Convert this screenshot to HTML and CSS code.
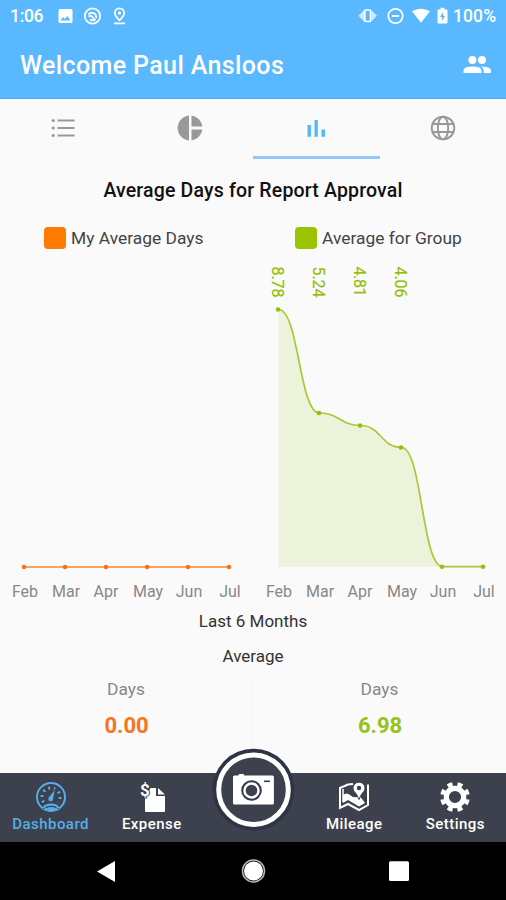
FILE: index.html
```
<!DOCTYPE html>
<html lang="en">
<head>
    <meta charset="UTF-8">
    <meta name="viewport" content="width=device-width, initial-scale=1.0">
    <title>Dashboard</title>
    <link rel="stylesheet" href="styles.css">
</head>
<body>
    <div class="app">
        <header class="header">
            <div class="status-bar">
                <span class="clock">1:06</span>
                <svg class="status-left" width="76" height="20" viewBox="0 0 76 20">
                    <path fill="#fff" fill-rule="evenodd" d="M3 3h11q1.500 0 1.500 1.500v11q0 1.500-1.500 1.500H3q-1.500 0-1.500-1.500v-11Q1.500 3 3 3zM3.500 14.500h10L10.400 10l-2.600 3-1.700-1.900z"/>
                    <g fill="none" stroke="#fff">
                        <circle cx="35.500" cy="10" r="7.700" stroke-width="1.800"/>
                        <path d="M31.500 8.500q3.500-3.500 7 0l1 3.500M31.500 10.500q2.500-1.500 4 .5l3 3.500M33 13.500q2 1.500 4 .5" stroke-width="1.800"/>
                    </g>
                    <path fill="none" stroke="#fff" stroke-width="1.700" d="M62.500 14.300q-4.700-4.600-4.700-7.300a4.700 4.700 0 0 1 9.400 0q0 2.700-4.700 7.300zM57 17.300h11"/>
                    <circle cx="62.500" cy="7" r="1.700" fill="#fff"/>
                </svg>
                <svg class="status-right" width="92" height="20" viewBox="0 0 92 20">
                    <path fill="#fff" fill-opacity=".7" d="M7 4v11.500L1.500 9.800zM14.400 4v11.500l5.500-5.700z"/>
                    <g fill="none" stroke="#fff">
                        <rect x="7.800" y="4" width="5.800" height="11.500" rx="1" stroke-width="1.700"/>
                        <circle cx="38.500" cy="10" r="7.200" stroke-width="1.700"/>
                        <path stroke-width="1.900" d="M34.800 10h7.400"/>
                    </g>
                    <path fill="#fff" d="M55 5.300q9-5 18 0L64 16.800z"/>
                    <path fill="#fff" fill-rule="evenodd" d="M83.500 1.800h4v1.600h1.700q1.300 0 1.300 1.300v11.500q0 1.300-1.300 1.300h-7.400q-1.300 0-1.300-1.300V4.700q0-1.300 1.300-1.300h1.700zM86 6l-3 5h2v4l3-5h-2z"/>
                </svg>
                <span class="battery">100%</span>
            </div>
            <div class="title-bar">
                <h1>Welcome Paul Ansloos</h1>
                <svg width="30" height="20" viewBox="0 0 30 20" fill="#fff">
                    <circle cx="10.400" cy="5" r="4"/>
                    <path d="M1.500 18v-2.300q0-4.200 9-4.200t9 4.200V18z"/>
                    <circle cx="20" cy="5" r="4"/>
                    <path d="M19.500 11.600q9.500.4 9.500 4.200V18h-7.300v-2.300q0-2.400-2.200-4.100z"/>
                </svg>
            </div>
        </header>

        <nav class="tabs">
            <div class="tab">
                <svg width="26" height="26" viewBox="0 0 26 26" fill="#999">
                    <circle cx="3.200" cy="5.500" r="1.600"/><circle cx="3.200" cy="13" r="1.600"/><circle cx="3.200" cy="20.500" r="1.600"/>
                    <path d="M7.500 4.500h17v2h-17zM7.500 12h17v2h-17zM7.500 19.500h17v2h-17z"/>
                </svg>
            </div>
            <div class="tab">
                <svg width="26" height="26" viewBox="0 0 26 26" fill="#999">
                    <path d="M12 .6v24.800a12.450 12.450 0 0 1 0-24.800zM14.500.6v10.900h10.900A12.500 12.500 0 0 0 14.500.6zM14.500 14.500v10.900a12.500 12.500 0 0 0 10.900-10.900z"/>
                </svg>
            </div>
            <div class="tab active">
                <svg width="26" height="26" viewBox="0 0 26 26" fill="#5ab5fc">
                    <path d="M4.500 10h3.600v11.700H4.500zM11.500 5h3.300v16.700h-3.300zM18.500 14.500h3.600v7.200h-3.600z"/>
                </svg>
            </div>
            <div class="tab">
                <svg width="26" height="26" viewBox="0 0 26 26" fill="none" stroke="#999" stroke-width="1.900">
                    <circle cx="13" cy="13" r="11.300"/><ellipse cx="13" cy="13" rx="5.200" ry="11.300"/>
                    <path d="M2.500 9h21M2.500 17h21"/>
                </svg>
            </div>
        </nav>

        <main class="content">
            <h2>Average Days for Report Approval</h2>
            <div class="charts">
                <section class="chart">
                    <div class="legend legend-mine"><span class="swatch orange"></span><span>My Average Days</span></div>
                    <svg width="253" height="348" viewBox="0 0 253 348">
                        <path d="M24 315H229" stroke="#ff7a1c" stroke-opacity=".7" stroke-width="1.800"/>
                        <g fill="#fb6d10">
                            <circle cx="24" cy="315" r="2.200"/><circle cx="65" cy="315" r="2.200"/><circle cx="106" cy="315" r="2.200"/>
                            <circle cx="147" cy="315" r="2.200"/><circle cx="188" cy="315" r="2.200"/><circle cx="229" cy="315" r="2.200"/>
                        </g>
                        <g class="months">
                            <text x="25" y="345">Feb</text><text x="66" y="345">Mar</text><text x="106" y="345">Apr</text>
                            <text x="148" y="345">May</text><text x="189" y="345">Jun</text><text x="230" y="345">Jul</text>
                        </g>
                    </svg>
                </section>
                <section class="chart">
                    <div class="legend legend-group"><span class="swatch green"></span><span>Average for Group</span></div>
                    <svg width="253" height="348" viewBox="0 0 253 348">
                        <path fill="#edf3da" d="M25.500 57.500C46 57.500 46 161 66.500 161S87 173.500 107.500 173.500S128 195.500 148.500 195.500S169 314.700 189.500 314.700H25.500z"/>
                        <path fill="none" stroke="#a5ca38" stroke-width="1.700" d="M25.500 57.500C46 57.500 46 161 66.500 161S87 173.500 107.500 173.500S128 195.500 148.500 195.500S169 314.700 189.500 314.700H230.500"/>
                        <g fill="#93c10b">
                            <circle cx="25" cy="57.500" r="2.300"/><circle cx="66" cy="161" r="2.300"/><circle cx="107" cy="173.500" r="2.300"/>
                            <circle cx="148" cy="195.500" r="2.300"/><circle cx="189" cy="314.700" r="2.300"/><circle cx="230" cy="314.700" r="2.300"/>
                        </g>
                        <g class="values">
                            <text transform="translate(18.500 14.500) rotate(90)" textLength="31">8.78</text>
                            <text transform="translate(60 14.500) rotate(90)" textLength="31">5.24</text>
                            <text transform="translate(101 14.500) rotate(90)" textLength="30">4.81</text>
                            <text transform="translate(142 14.500) rotate(90)" textLength="31">4.06</text>
                        </g>
                        <g class="months">
                            <text x="26" y="345">Feb</text><text x="67" y="345">Mar</text><text x="107" y="345">Apr</text>
                            <text x="149" y="345">May</text><text x="190" y="345">Jun</text><text x="231" y="345">Jul</text>
                        </g>
                    </svg>
                </section>
            </div>
            <p class="caption">Last 6 Months</p>
            <p class="caption">Average</p>
            <div class="totals">
                <div class="total"><span class="unit">Days</span><strong class="mine">0.00</strong></div>
                <div class="total"><span class="unit">Days</span><strong class="group">6.98</strong></div>
            </div>
        </main>

        <nav class="bottom-nav">
            <a class="nav-item current">
                <svg width="32" height="32" viewBox="0 0 32 32" fill="none" stroke="#55aee8">
                    <circle cx="16" cy="16" r="14" stroke-width="2"/>
                    <circle cx="16" cy="16" r="9" stroke-width="3" stroke-dasharray="2 3.650" pathLength="56.500"/>
                    <path fill="#3c414d" stroke="none" d="M8 22l8-5 8 5v6H8z"/>
                    <path fill="#55aee8" stroke="none" d="M7.500 26.500q2-4 8.500-4t8.500 4Q16 32 7.500 26.500z"/>
                    <path stroke="#3c414d" stroke-width="1.300" d="M10.500 26.700q5.500-2.500 11 0"/>
                    <path fill="#55aee8" stroke="#3c414d" stroke-width=".8" d="M20.500 7.500l-2 10a2.800 2.800 0 1 1-4.500-1.800z"/>
                </svg>
                <span>Dashboard</span>
            </a>
            <a class="nav-item">
                <svg width="32" height="32" viewBox="0 0 32 32">
                    <path fill="#fff" d="M14.500 7H20v8h9v15q0 1-1 1H10q-1 0-1-1V17zM22 7l7 6.500h-7z"/>
                    <text class="dollar" x="4" y="15">$</text>
                </svg>
                <span>Expense</span>
            </a>
            <a class="nav-item camera">
                <svg class="camera-button" width="86" height="86" viewBox="0 0 86 86">
                    <circle cx="43.500" cy="42.700" r="41" fill="#2d3545"/>
                    <circle cx="43.500" cy="42.700" r="34.800" fill="#3c414d" stroke="#fff" stroke-width="5"/>
                    <path fill="#fff" d="M24.500 28.500h3.700l1-1.500h4.200l1 1.500h28q1.500 0 1.500 1.500v26q0 1.500-1.500 1.500h-38Q23 57.500 23 56V30q0-1.500 1.500-1.500z"/>
                    <circle cx="41.500" cy="43.500" r="9.300" fill="none" stroke="#30394a" stroke-width="2"/>
                    <circle cx="41.500" cy="43.500" r="5.800" fill="#3c414d"/>
                    <path stroke="#3c414d" stroke-width="1.600" d="M54 34.300h6"/>
                </svg>
            </a>
            <a class="nav-item">
                <svg width="32" height="32" viewBox="0 0 32 32">
                    <path fill="none" stroke="#fff" stroke-width="2" d="M15 3L10 3.500 2 7v20l8-4 11 6 9-5V3.500"/>
                    <path fill="#fff" d="M5 14q4-3 7 0t7 2l2-2 6 8-6 3.500L10 19l-5 3z"/>
                    <path fill="none" stroke="#fff" stroke-width="1.500" d="M5 8v12l5-2.500"/>
                    <path fill="#fff" stroke="#3c414d" stroke-width="1" d="M21 18.500q-2-5-3.500-6.500a6 6 0 1 1 7 0q-1.500 1.500-3.500 6.500z"/>
                    <circle cx="21" cy="7" r="2.200" fill="#3c414d"/>
                </svg>
                <span>Mileage</span>
            </a>
            <a class="nav-item">
                <svg width="32" height="32" viewBox="0 0 32 32" fill="none" stroke="#fff">
                    <circle cx="16" cy="16" r="8.700" stroke-width="5.200"/>
                    <circle cx="16" cy="16" r="12.600" stroke-width="4.600" pathLength="80" stroke-dasharray="5 5" stroke-dashoffset="-2.500"/>
                </svg>
                <span>Settings</span>
            </a>
        </nav>

        <footer class="system-bar">
            <svg width="24" height="24" viewBox="0 0 24 24"><path fill="#fff" d="M2 12.500L20 2v21z"/></svg>
            <svg width="26" height="26" viewBox="0 0 26 26"><circle cx="13.500" cy="13" r="11" fill="none" stroke="#bbb" stroke-width="1.500"/><circle cx="13.500" cy="13" r="9.500" fill="#fff"/></svg>
            <svg width="24" height="24" viewBox="0 0 24 24"><rect x="2" y="2.300" width="20" height="19.700" rx="1.500" fill="#fff"/></svg>
        </footer>
    </div>
</body>
</html>
```
FILE: styles.css
```
* {
    box-sizing: border-box;
}
body {
    margin: 0;
    font-family: Roboto, "Liberation Sans", sans-serif;
    background: #fafafa;
}
h1, h2, p {
    margin: 0;
}
svg {
    display: block;
    flex-shrink: 0;
}
.app {
    width: 506px;
    height: 900px;
    display: flex;
    flex-direction: column;
    overflow: hidden;
}
.header {
    height: 99px;
    background: #5ab8ff;
    border-bottom: 1px solid #3faef3;
    color: #fff;
}
.status-bar {
    height: 32px;
    display: flex;
    align-items: center;
    padding: 0 9px 0 10px;
    font-size: 17.500px;
    font-weight: 500;
}
.clock {
    width: 47px;
    letter-spacing: -0.3px;
}
.status-right {
    margin-left: auto;
    margin-right: 4px;
}
.battery {
    width: 44px;
    letter-spacing: 0.1px;
}
.title-bar {
    height: 66px;
    display: flex;
    align-items: center;
    justify-content: space-between;
    padding: 0 14px 0 20px;
}
h1 {
    font-size: 25px;
    font-weight: 500;
    letter-spacing: 0.38px;
}
.tabs {
    height: 60px;
    display: flex;
}
.tab {
    flex: 1;
    display: flex;
    justify-content: center;
    padding-top: 16px;
    border-bottom: 3px solid transparent;
}
.tab.active {
    border-color: #91c7fa;
}
.content {
    height: 614px;
    text-align: center;
}
h2 {
    height: 62px;
    padding-top: 20px;
    font-size: 19.500px;
    line-height: 24px;
    font-weight: 500;
    letter-spacing: 0.17px;
    color: #111;
}
.charts {
    display: flex;
}
.chart {
    width: 253px;
}
.legend {
    height: 31px;
    display: flex;
    align-items: center;
    gap: 5px;
    padding-top: 3px;
    font-size: 17.400px;
    color: #444;
    white-space: nowrap;
}
.legend-mine {
    padding-left: 44px;
}
.legend-group {
    padding-left: 42px;
}
.swatch {
    width: 22px;
    height: 22px;
    border-radius: 4px;
}
.orange {
    background: #ff7a00;
}
.green {
    background: #9bc400;
}
.months text {
    font-size: 16px;
    fill: #888;
    text-anchor: middle;
}
.values text {
    font-size: 16px;
    fill: #93bf08;
    stroke: #93bf08;
    stroke-width: 0.2px;
}
.caption {
    height: 35px;
    padding-top: 9px;
    font-size: 17px;
    line-height: 24px;
    color: #333;
}
.totals {
    display: flex;
    padding-top: 7px;
}
.total {
    width: 253px;
    height: 70px;
    display: flex;
    flex-direction: column;
    align-items: center;
}
.total:first-child {
    border-right: 1px solid #f2f2f2;
}
.unit {
    font-size: 17.400px;
    line-height: 24px;
    color: #888;
}
.total strong {
    padding-top: 12px;
    padding-left: 1px;
    font-size: 22px;
    line-height: 26px;
    font-weight: 700;
}
.mine {
    color: #fa7420;
}
.group {
    color: #98c21a;
}
.bottom-nav {
    height: 69px;
    flex-shrink: 0;
    display: grid;
    grid-template-columns: repeat(5, 1fr);
    background: #3c414d;
    color: #fff;
}
.nav-item {
    display: flex;
    flex-direction: column;
    align-items: center;
    padding-top: 8px;
    font-size: 15px;
    line-height: 22px;
    font-weight: 500;
    letter-spacing: 0.45px;
}
.current {
    color: #55aee8;
}
.camera {
    position: relative;
}
/* round button rises above the bar */
.camera-button {
    position: absolute;
    top: -26px;
    left: 8px;
}
.dollar {
    fill: #fff;
    stroke: #3c414d;
    stroke-width: 2px;
    paint-order: stroke;
    font-size: 17px;
    font-weight: 700;
    letter-spacing: 0;
}
.system-bar {
    height: 58px;
    flex-shrink: 0;
    display: flex;
    justify-content: space-between;
    align-items: center;
    padding: 0 95px;
    background: #000;
}
```
